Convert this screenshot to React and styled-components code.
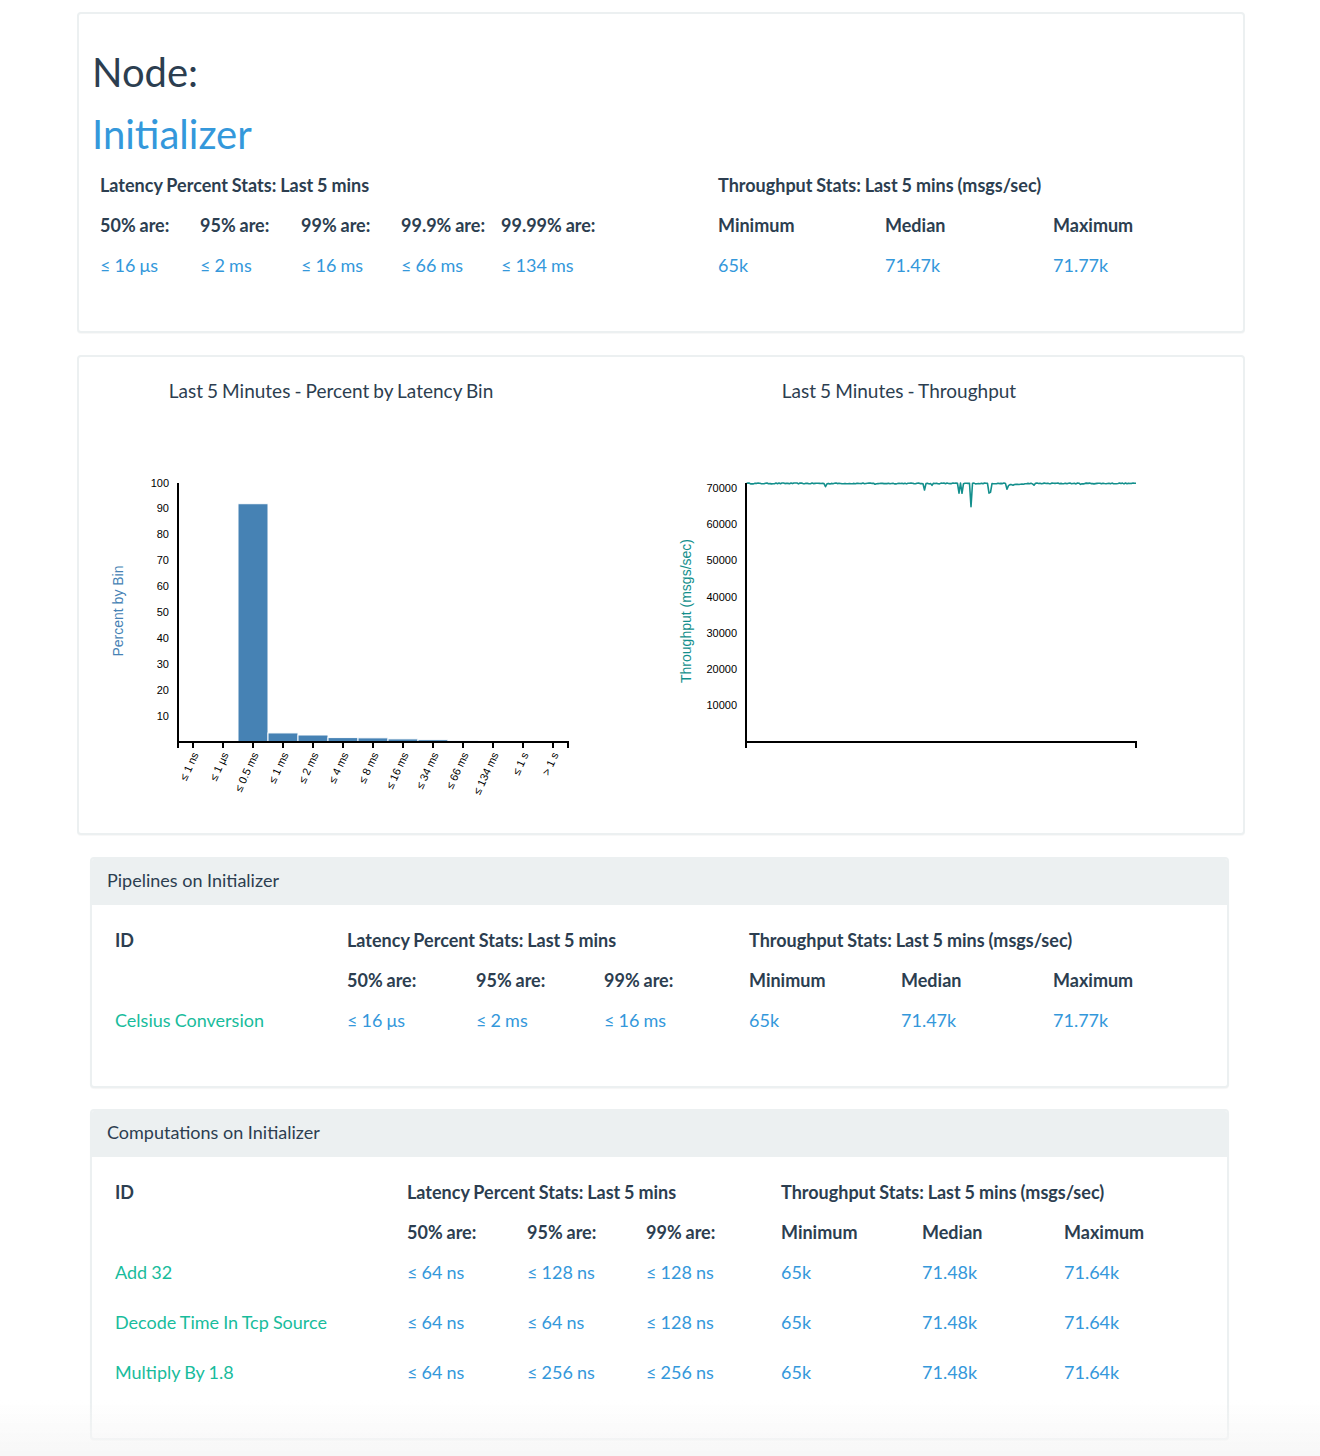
import React from 'react';
import styled, { createGlobalStyle } from 'styled-components';

const GlobalStyle = createGlobalStyle`
  html, body { margin: 0; padding: 0; background: #ffffff; }
  body {
    font-family: Lato, "Open Sans", "Liberation Sans", sans-serif;
    color: #2c3e50;
  }
`;

const DARK = '#2c3e50';
const BLUE = '#3498db';
const GREEN = '#18bc9c';

const Page = styled.div`
  width: 1170px;
  margin: 0 auto;
  padding: 12px 0 20px;
`;

const Well = styled.section`
  margin: 0 0 22px 2px;
  border: 2px solid #ecf0f1;
  border-radius: 4px;
  background: #fff;
  box-shadow: 0 1px 1px rgba(0, 0, 0, 0.03);
  padding: ${p => p.$pad};
`;

const Title = styled.h1`
  margin: ${p => p.$mt || 0}px 0 0 -1px;
  font-size: 40px;
  line-height: 44px;
  font-weight: 400;
  color: ${p => (p.$blue ? BLUE : DARK)};
`;

const StatGrid = styled.div`
  display: grid;
  grid-template-columns: ${p => p.$cols};
  grid-template-rows: 40px 40px;
  grid-auto-rows: ${p => p.$dataRow || 40}px;
  align-items: start;
  margin: ${p => p.$margin || 0};
  font-size: 18px;
  line-height: 40px;
  word-spacing: -0.5px;
`;

const Head = styled.div`
  font-weight: 700;
  color: ${DARK};
  white-space: nowrap;
  grid-column: span ${p => p.$span || 1};
`;

const Val = styled.div`
  white-space: nowrap;
  color: ${p => (p.$green ? GREEN : BLUE)};
`;

const Blank = styled.div``;

const ChartRow = styled.div`
  display: flex;
  gap: 92px;
`;

const ChartBlock = styled.div`
  width: 476px;
  display: flex;
  flex-direction: column;
  align-items: center;
`;

const ChartTitle = styled.div`
  font-size: 19px;
  line-height: 24px;
  word-spacing: -0.8px;
  color: ${DARK};
  white-space: nowrap;
`;

const ChartSvg = styled.svg`
  display: block;
  margin-top: 12px;
  font-family: "Liberation Sans", Arial, sans-serif;
  overflow: visible;
`;

const Panel = styled.section`
  margin: 0 0 21px 15px;
  width: 1139px;
  box-sizing: border-box;
  border: 2px solid #ecf0f1;
  border-radius: 4px;
  background: #fff;
  box-shadow: 0 1px 1px rgba(0, 0, 0, 0.04);
  overflow: hidden;
`;

const PanelHeading = styled.div`
  height: 46px;
  box-sizing: border-box;
  display: flex;
  align-items: center;
  padding: 0 15px 5px;
  background: #ecf0f1;
  font-size: 18px;
  color: ${DARK};
`;

const PanelBody = styled.div`
  padding: 15px 0 36px 23px;
`;

const BottomFade = styled.div`
  position: fixed;
  left: 0;
  right: 0;
  bottom: 0;
  height: 56px;
  pointer-events: none;
  background: linear-gradient(rgba(246, 246, 246, 0), rgba(246, 246, 246, 0.9));
`;

/* ---------- chart geometry ---------- */
const AX_X = 85;
const AX_TOP = 68;
const AX_BOTTOM = 327;
const AX_RIGHT = 475;

const bins = ['≤ 1 ns', '≤ 1 µs', '≤ 0.5 ms', '≤ 1 ms', '≤ 2 ms', '≤ 4 ms', '≤ 8 ms', '≤ 16 ms', '≤ 34 ms', '≤ 66 ms', '≤ 134 ms', '≤ 1 s', '> 1 s'];
const binVals = [0, 0, 92, 3.5, 2.7, 1.7, 1.6, 1.2, 0.9, 0.45, 0.1, 0, 0];

const histY = v => AX_BOTTOM - (v / 100) * (AX_BOTTOM - AX_TOP);
const TP_MAX = 71500;
const tpY = v => AX_BOTTOM - (v / TP_MAX) * (AX_BOTTOM - AX_TOP);

function buildThroughputPath() {
  let seed = 12345;
  const rnd = () => {
    seed = (seed * 16807) % 2147483647;
    return seed / 2147483647;
  };
  const n = 260;
  const step = (AX_RIGHT - AX_X) / n;
  const pts = [];
  for (let i = 0; i <= n; i++) {
    const x = i * step;
    let base = 71380;
    if (x > 262 && x < 285) base = 71380 - (285 - x) * 22;
    pts.push([x, base + (rnd() - 0.5) * 260]);
  }
  const dips = [
    [79.7, 70480], [129, 71150], [178.3, 69570], [186.7, 70870],
    [213.5, 68700], [215.5, 68650], [225, 64960], [242.5, 68700], [244, 68900],
    [260.7, 69760], [287.3, 70900], [335, 71100],
  ];
  dips.forEach(([dx, v]) => {
    const idx = Math.round(dx / step);
    if (pts[idx]) pts[idx][1] = v;
  });
  return pts
    .map(([x, v], i) => `${i ? 'L' : 'M'}${(AX_X + x).toFixed(1)},${tpY(v).toFixed(1)}`)
    .join('');
}

const tpPath = buildThroughputPath();

const AxisLines = ({ ticks }) => (
  <g stroke="#000" strokeWidth="2" fill="none" shapeRendering="crispEdges">
    <path d={`M${AX_X},${AX_TOP}V${AX_BOTTOM}`} />
    <path d={`M${AX_X},${AX_BOTTOM + 6}V${AX_BOTTOM}H${AX_RIGHT}V${AX_BOTTOM + 6}`} />
    {ticks.map(t => (
      <line key={t} x1={t} x2={t} y1={AX_BOTTOM} y2={AX_BOTTOM + 6} />
    ))}
  </g>
);

const YLabel = ({ children, color }) => (
  <text
    transform={`translate(25,196) rotate(-90)`}
    textAnchor="middle"
    dy="0.35em"
    fontSize="14"
    fill={color}
  >
    {children}
  </text>
);

const Histogram = () => {
  const ticks = bins.map((_, i) => AX_X + i * 30 + 15);
  return (
    <ChartSvg width="476" height="395" viewBox="0 0 476 395">
      {binVals.map((v, i) =>
        v > 0 ? (
          <rect
            key={i}
            x={AX_X + i * 30}
            y={histY(v)}
            width={30}
            height={AX_BOTTOM - histY(v)}
            fill="#4682b4"
            stroke="#fff"
            strokeWidth="1"
          />
        ) : null
      )}
      {[10, 20, 30, 40, 50, 60, 70, 80, 90, 100].map(v => (
        <text key={v} x={76} y={histY(v)} dy="0.32em" textAnchor="end" fontSize="11" fill="#000">
          {v}
        </text>
      ))}
      {bins.map((b, i) => (
        <text
          key={b}
          transform={`translate(${ticks[i]},${AX_BOTTOM}) rotate(-65)`}
          x={-8.8}
          y={9}
          dy="0.15em"
          textAnchor="end"
          fontSize="11"
          fill="#000"
        >
          {b}
        </text>
      ))}
      <AxisLines ticks={ticks} />
      <YLabel color="#4682b4">Percent by Bin</YLabel>
    </ChartSvg>
  );
};

const ThroughputChart = () => (
  <ChartSvg width="476" height="395" viewBox="0 0 476 395">
    {[10000, 20000, 30000, 40000, 50000, 60000, 70000].map(v => (
      <text key={v} x={76} y={tpY(v)} dy="0.32em" textAnchor="end" fontSize="11" fill="#000">
        {v}
      </text>
    ))}
    <path d={tpPath} fill="none" stroke="#138f8c" strokeWidth="1.6" strokeLinejoin="round" />
    <AxisLines ticks={[]} />
    <YLabel color="#138f8c">Throughput (msgs/sec)</YLabel>
  </ChartSvg>
);

/* ---------- data ---------- */
const computations = [
  { id: 'Add 32', lat: ['≤ 64 ns', '≤ 128 ns', '≤ 128 ns'], tp: ['65k', '71.48k', '71.64k'] },
  { id: 'Decode Time In Tcp Source', lat: ['≤ 64 ns', '≤ 64 ns', '≤ 128 ns'], tp: ['65k', '71.48k', '71.64k'] },
  { id: 'Multiply By 1.8', lat: ['≤ 64 ns', '≤ 256 ns', '≤ 256 ns'], tp: ['65k', '71.48k', '71.64k'] },
];

const StatsTable = ({ cols, rows }) => (
  <StatGrid $cols={cols} $dataRow={50}>
    <Head>ID</Head>
    <Head $span={3}>Latency Percent Stats: Last 5 mins</Head>
    <Head $span={3}>Throughput Stats: Last 5 mins (msgs/sec)</Head>
    <Blank />
    <Head>50% are:</Head>
    <Head>95% are:</Head>
    <Head>99% are:</Head>
    <Head>Minimum</Head>
    <Head>Median</Head>
    <Head>Maximum</Head>
    {rows.map(r => (
      <React.Fragment key={r.id}>
        <Val $green>{r.id}</Val>
        {r.lat.map((l, i) => (
          <Val key={'l' + i}>{l}</Val>
        ))}
        {r.tp.map((t, i) => (
          <Val key={'t' + i}>{t}</Val>
        ))}
      </React.Fragment>
    ))}
  </StatGrid>
);

export default function App() {
  return (
    <>
      <GlobalStyle />
      <Page>
        <Well $pad="36px 14px 46px">
          <Title>Node:</Title>
          <Title $blue $mt={18}>Initializer</Title>
          <StatGrid $cols="100px 101px 100px 100px 217px 167px 168px 1fr" $margin="9px 0 0 7px">
            <Head $span={5}>Latency Percent Stats: Last 5 mins</Head>
            <Head $span={3}>Throughput Stats: Last 5 mins (msgs/sec)</Head>
            <Head>50% are:</Head>
            <Head>95% are:</Head>
            <Head>99% are:</Head>
            <Head>99.9% are:</Head>
            <Head>99.99% are:</Head>
            <Head>Minimum</Head>
            <Head>Median</Head>
            <Head>Maximum</Head>
            <Val>≤ 16 μs</Val>
            <Val>≤ 2 ms</Val>
            <Val>≤ 16 ms</Val>
            <Val>≤ 66 ms</Val>
            <Val>≤ 134 ms</Val>
            <Val>65k</Val>
            <Val>71.47k</Val>
            <Val>71.77k</Val>
          </StatGrid>
        </Well>

        <Well $pad="22px 14px 23px">
          <ChartRow>
            <ChartBlock>
              <ChartTitle>Last 5 Minutes - Percent by Latency Bin</ChartTitle>
              <Histogram />
            </ChartBlock>
            <ChartBlock>
              <ChartTitle>Last 5 Minutes - Throughput</ChartTitle>
              <ThroughputChart />
            </ChartBlock>
          </ChartRow>
        </Well>

        <Panel>
          <PanelHeading>Pipelines on Initializer</PanelHeading>
          <PanelBody>
            <StatsTable
              cols="232px 129px 128px 145px 152px 152px 1fr"
              rows={[{ id: 'Celsius Conversion', lat: ['≤ 16 μs', '≤ 2 ms', '≤ 16 ms'], tp: ['65k', '71.47k', '71.77k'] }]}
            />
          </PanelBody>
        </Panel>

        <Panel>
          <PanelHeading>Computations on Initializer</PanelHeading>
          <PanelBody>
            <StatsTable cols="292px 120px 119px 135px 141px 142px 1fr" rows={computations} />
          </PanelBody>
        </Panel>
      </Page>
      <BottomFade />
    </>
  );
}
